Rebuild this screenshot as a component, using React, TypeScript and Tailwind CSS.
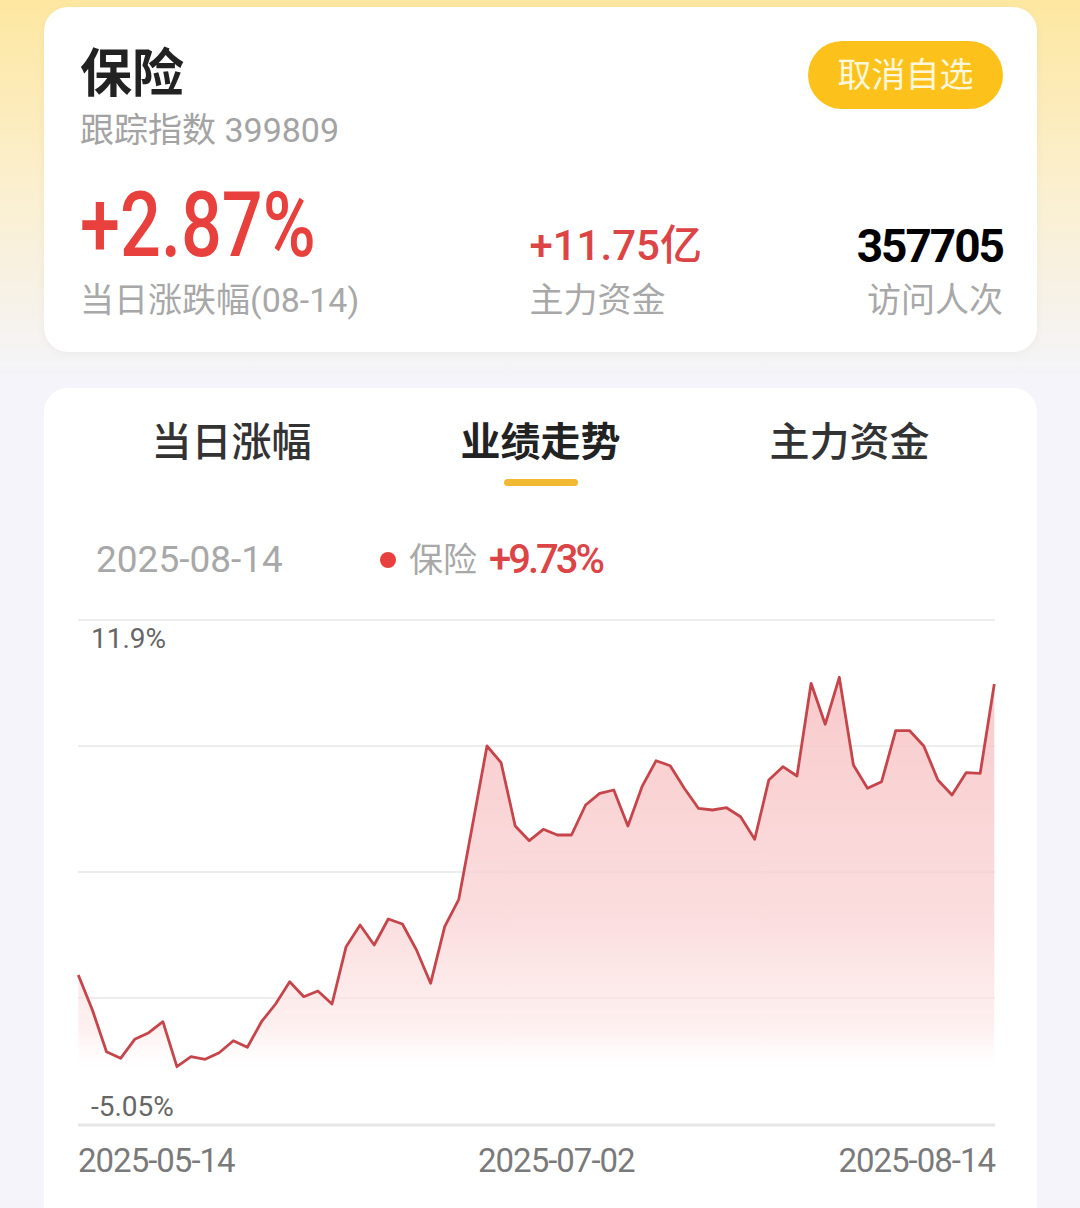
import React from "react";

const ys = [
  975, 1010, 1051.7, 1058.3, 1039.3, 1032.7, 1021.7, 1066.7, 1056.7, 1059.3,
  1052.7, 1040.7, 1047.3, 1021.7, 1004, 981.7, 996.7, 991, 1004, 946.7,
  925, 945, 919, 924, 950, 983.3, 926.7, 899.3, 823, 746,
  762.7, 826, 840.7, 829.3, 835, 835, 805, 793.3, 790, 826,
  786.7, 760.7, 765.7, 788.3, 808.3, 810, 807.7, 816.7, 839.3, 780,
  766.7, 776, 683.3, 724.3, 677.3, 765, 788.3, 781.7, 730.7, 730.7,
  746, 780, 795, 772.7, 773.3, 684,
];

function Chart() {
  const pts = ys.map((y, i) => [78.3 + i * ((994.3 - 78.3) / (ys.length - 1)), y]);
  const line = "M" + pts.map((p) => `${p[0].toFixed(1)} ${p[1]}`).join(" L");
  const area = `${line} L994.3 1125 L78.3 1125 Z`;
  return (
    <div className="relative mt-[35px] h-[515px] w-[993px]">
      <svg width="993" height="515" viewBox="44 615 993 515" className="block">
        <defs>
          <linearGradient id="fillGrad" gradientUnits="userSpaceOnUse" x1="0" y1="677" x2="0" y2="1078">
            <stop offset="0" stopColor="#f8c4c6" stopOpacity="0.9" />
            <stop offset="0.6" stopColor="#fad5d6" stopOpacity="0.8" />
            <stop offset="0.88" stopColor="#fde6e6" stopOpacity="0.6" />
            <stop offset="1" stopColor="#ffffff" stopOpacity="0" />
          </linearGradient>
        </defs>
        {[620, 746, 872, 998].map((y) => (
          <line key={y} x1="78" x2="995" y1={y} y2={y} stroke="#ededed" strokeWidth="2" />
        ))}
        <path d={area} fill="url(#fillGrad)" />
        <path d={line} fill="none" stroke="#c6454a" strokeWidth="2.8" strokeLinejoin="round" />
        <line x1="78" x2="995" y1="1125" y2="1125" stroke="#e6e6e6" strokeWidth="3" />
      </svg>
      <div className="absolute left-[47px] top-[10px] text-[28px] leading-[28px] text-[#666]">11.9%</div>
      <div className="absolute left-[47px] top-[478px] text-[28px] leading-[28px] text-[#666]">-5.05%</div>
    </div>
  );
}

export default function App() {
  return (
    <div className="h-[1208px] w-[1080px] overflow-hidden bg-[linear-gradient(180deg,#fde7a0_0px,#fbefcd_180px,#f4f4fa_380px)] font-['Roboto','Noto_Sans_CJK_SC',sans-serif]">
      {/* Card 1 */}
      <div className="ml-[44px] mt-[7px] h-[345px] w-[993px] rounded-[24px] bg-white pl-[36px] pr-[34px] pt-[34px] shadow-[0_2px_10px_rgba(0,0,0,0.04)]">
        <div className="flex items-start justify-between">
          <div className="pt-[4px]">
            <div className="text-[52px] font-bold leading-[60px] text-[#222]">保险</div>
            <div className="mt-[5px] text-[34px] leading-[40px] text-[#a3a3a3]">跟踪指数 399809</div>
          </div>
          <div className="flex h-[68px] w-[195px] items-center justify-center rounded-full bg-[#fcc21b] text-[34px] leading-[40px] text-[#fff7da]">
            取消自选
          </div>
        </div>
        <div className="mt-[31px] flex items-end justify-between">
          <div className="flex flex-col">
            <div className="h-[90px] origin-left scale-x-[0.8] text-[90px] font-medium leading-[90px] text-[#e8403d]">
              +2.87%
            </div>
            <div className="mt-[9px] text-[34px] leading-[40px] text-[#a8a8a8]">当日涨跌幅(08-14)</div>
          </div>
          <div className="flex flex-col">
            <div className="h-[50px] text-[42px] font-medium leading-[50px] text-[#dc4446]">+11.75亿</div>
            <div className="mt-[9px] text-[34px] leading-[40px] text-[#a8a8a8]">主力资金</div>
          </div>
          <div className="flex flex-col items-end">
            <div className="h-[50px] text-[46px] font-bold leading-[50px] tracking-[-2px] text-black">357705</div>
            <div className="mt-[9px] text-[34px] leading-[40px] text-[#a8a8a8]">访问人次</div>
          </div>
        </div>
      </div>

      {/* Card 2 */}
      <div className="ml-[44px] mt-[36px] h-[900px] w-[993px] rounded-t-[24px] bg-white pt-[31px]">
        <div className="grid grid-cols-3 px-[33px]">
          <div className="flex flex-col items-center">
            <div className="text-[40px] font-medium leading-[48px] text-[#333]">当日涨幅</div>
            <div className="mt-[12px] h-[7px]" />
          </div>
          <div className="flex flex-col items-center">
            <div className="text-[40px] font-bold leading-[48px] text-[#222]">业绩走势</div>
            <div className="mt-[12px] h-[7px] w-[74px] rounded-full bg-[#f2b933]" />
          </div>
          <div className="flex flex-col items-center">
            <div className="text-[40px] font-medium leading-[48px] text-[#333]">主力资金</div>
            <div className="mt-[12px] h-[7px]" />
          </div>
        </div>

        <div className="mt-[54px] flex h-[40px] items-center pl-[52px]">
          <div className="w-[284px] text-[37px] leading-[40px] text-[#a8a8a8]">2025-08-14</div>
          <div className="h-[16px] w-[16px] rounded-full bg-[#e8403d]" />
          <div className="ml-[13px] text-[34px] leading-[40px] text-[#a8a8a8]">保险</div>
          <div className="ml-[12px] text-[40px] font-medium leading-[40px] tracking-[-3px] text-[#dc4446]">+9.73%</div>
        </div>

        <Chart />

        <div className="ml-[34px] mt-[13px] flex w-[917px] text-[33px] leading-[36px] tracking-[-1px] text-[#7a7a7a]">
          <span className="w-[400px]">2025-05-14</span>
          <span>2025-07-02</span>
          <span className="ml-auto">2025-08-14</span>
        </div>
      </div>
    </div>
  );
}
